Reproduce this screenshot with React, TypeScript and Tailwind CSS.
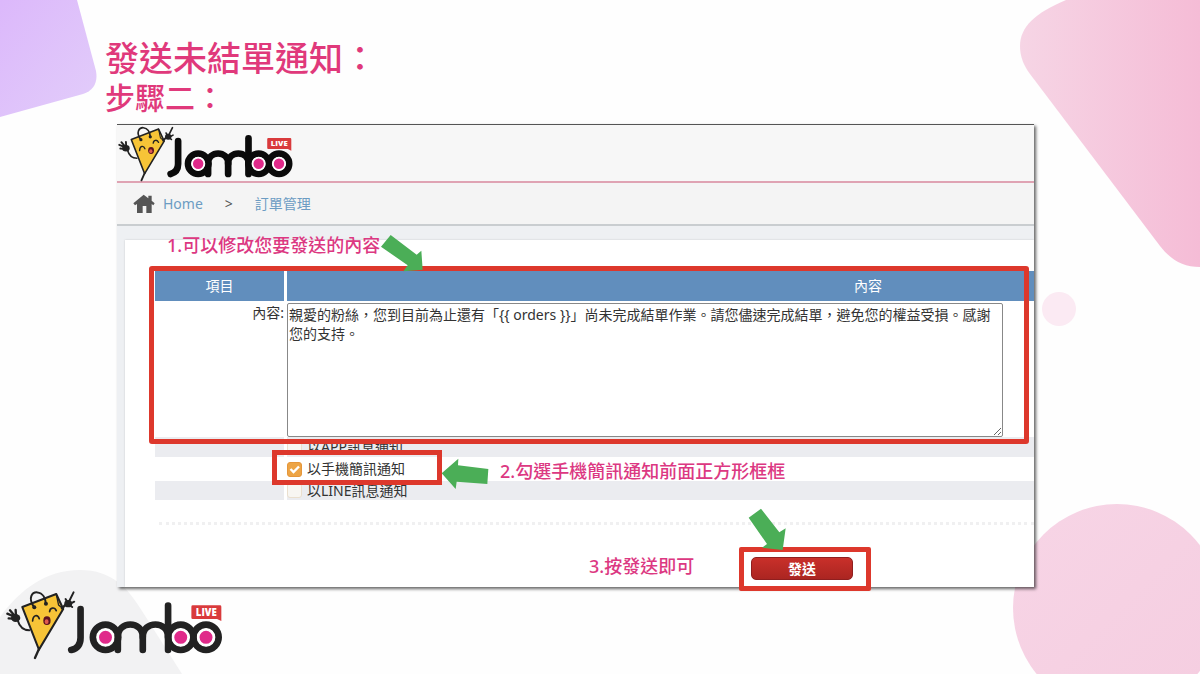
import { useState } from "react";

function JamboLogo({ className, heavy = false }: { className: string; heavy?: boolean }) {
  return (
    <svg viewBox="15 92 655 213" className={className} role="img" aria-label="Jambo Live">
      <g fill="none" stroke="#222" strokeLinecap="round" strokeLinejoin="round">
        <path d="M67 146 L169 107 L190 152 L117 274 Z" fill="#f7c437" strokeWidth="6" />
        <path d="M169 107 L176 140 L190 152" strokeWidth="4" />
        <path d="M103 147 C82 118 97 101 112 102 C129 104 137 120 138 136" strokeWidth="6" />
        <path d="M117 272 L105 299" strokeWidth="7" />
        <path d="M98 188 C99 169 113 167 118 181 M149 160 C150 147 164 145 169 157" strokeWidth="5" />
        <path d="M88 216 C67 216 57 200 53 186" strokeWidth="6" />
        <path d="M186 150 L198 138" strokeWidth="7" />
        <path d="M45 176 L22 166 M45 174 L30 156 M48 172 L47 155 M38 181 L26 180" strokeWidth="7" />
        <path d="M207 130 L221 102 M203 132 L197 122 M212 136 L223 130 M208 140 L217 146" strokeWidth="6" />
      </g>
      <circle cx="103" cy="147" r="6" fill="#222" />
      <circle cx="138" cy="136" r="6" fill="#222" />
      <ellipse cx="47" cy="179" rx="14" ry="12" fill="#222" />
      <ellipse cx="205" cy="136" rx="12" ry="11" fill="#222" />
      <ellipse cx="141" cy="187" rx="11" ry="13" fill="#5b1220" />
      <ellipse cx="140" cy="190" rx="6" ry="7" fill="#e05a4e" />
      <g fill="none" stroke={heavy ? "#0b0b0b" : "#222"} strokeWidth={heavy ? 25 : 20} strokeLinecap="round">
        <path d="M242 152 V238 Q242 268 214 275" />
        <circle cx="317" cy="237" r="38" />
        <path d="M354 237 V275" />
        <path d="M354 236 C354 186 429 186 429 236 V275" />
        <path d="M429 236 C429 186 505 186 505 236" />
        <path d="M505 142 V275" />
        <circle cx="543" cy="237" r="38" />
        <circle cx="619" cy="237" r="38" />
      </g>
      <g fill="#e02a8a" stroke="#fff" strokeWidth="7">
        <circle cx="317" cy="237" r="23" />
        <circle cx="543" cy="237" r="23" />
        <circle cx="619" cy="237" r="23" />
      </g>
      <path d="M579 141 H661 Q665 141 665 145 V188 L652 182 H579 Q575 182 575 178 V145 Q575 141 579 141 Z" fill="#d93a3c" />
      <text x="620" y="172" textAnchor="middle" fontSize="29" fontWeight="800" fill="#fff" fontFamily="Open Sans, sans-serif">
        LIVE
      </text>
    </svg>
  );
}

function Backdrop() {
  return (
    <div aria-hidden="true">
      <svg className="absolute top-0 left-0 h-[118px] w-[98px]" viewBox="0 0 98 118">
        <defs>
          <linearGradient id="lilac" x1="0" y1="0" x2="1" y2="1">
            <stop offset="0" stopColor="#dcb8fb" />
            <stop offset="1" stopColor="#e2cdfa" />
          </linearGradient>
        </defs>
        <path d="M0 0 H77 L96 71 Q99 89 83 94 L0 117 Z" fill="url(#lilac)" />
      </svg>
      <svg className="absolute top-0 right-0 h-[268px] w-[180px]" viewBox="0 0 180 268">
        <defs>
          <linearGradient id="rose" x1="0" y1="0" x2="1" y2="0">
            <stop offset="0" stopColor="#f6d5e5" />
            <stop offset="1" stopColor="#f5bcd6" />
          </linearGradient>
        </defs>
        <path d="M46 0 C15 13 0 27 0 46 C0 57 4 66 10 74 L140 246 C151 260 163 267 180 267 V0 Z" fill="url(#rose)" />
      </svg>
      <div className="absolute top-[292px] right-[124px] size-[34px] rounded-full bg-[#fbeaf3]" />
      <div className="absolute top-[504px] -right-[21px] size-[208px] rounded-full bg-linear-to-br from-[#f7d5e6] to-[#f5cde0]" />
      <svg className="absolute top-[570px] left-0 h-[104px] w-[182px]" viewBox="0 0 182 104">
        <path d="M0 47 C20 20 45 0 80 0 C112 0 128 18 142 41 L182 104 H0 Z" fill="#f2f2f3" />
      </svg>
    </div>
  );
}

function Arrow({ className, viewBox, points }: { className: string; viewBox: string; points: string }) {
  return (
    <svg className={className} viewBox={viewBox} aria-hidden="true">
      <polygon points={points} fill="#4bae57" />
    </svg>
  );
}

const channels = [
  { id: "app", label: "以APP訊息通知", row: "h-[20px]", shade: "bg-[#ebecf0]" },
  { id: "sms", label: "以手機簡訊通知", row: "h-[24px]", shade: "bg-white" },
  { id: "line", label: "以LINE訊息通知", row: "h-[19px]", shade: "bg-[#ebecf0]" },
];

export default function App() {
  const [picked, setPicked] = useState<string[]>(["sms"]);
  const [message, setMessage] = useState(
    "親愛的粉絲，您到目前為止還有「{{ orders }}」尚未完成結單作業。請您儘速完成結單，避免您的權益受損。感謝您的支持。"
  );
  const toggle = (id: string) =>
    setPicked((now) => (now.includes(id) ? now.filter((x) => x !== id) : [...now, id]));

  return (
    <div
      lang="zh-Hant"
      className="relative min-h-screen overflow-hidden bg-[#fefefe] font-['Noto_Sans','Noto_Sans_CJK_TC',sans-serif] text-[14px] text-[#333]"
    >
      <Backdrop />
      <main className="relative pt-[39px]">
        <header className="pl-[105px] font-['Liberation_Sans','Noto_Sans_CJK_TC',sans-serif] font-medium text-[#e0397b]">
          <h1 className="text-[34px] leading-[40px]">發送未結單通知：</h1>
          <h2 className="text-[30px] leading-[40px]">步驟二：</h2>
        </header>

        <section className="relative mt-[5px] mr-[166px] ml-[117px]">
          <div className="overflow-hidden border-t border-[#555] bg-[#eef0f3] shadow-[2px_2px_3px_rgba(0,0,0,0.6)]">
            <div className="h-[58px] border-b-2 border-[#dfa3b3] bg-[#f7f7f7]">
              <JamboLogo heavy className="block h-[57px] w-[176px]" />
            </div>
            <nav className="flex h-[43px] items-center border-b-2 border-[#c9cdd0] bg-[#f4f4f4] pl-4 text-[#6c9cc3]">
              <svg viewBox="68 218 66 60" className="h-5 w-[22px]" aria-hidden="true">
                <path
                  d="M100 220 L114 231 V223 H124 V238 L133 246 L129 252 L124 248 V275 H108 V254 H97 V275 H80 V248 L74 252 L69 246 Z"
                  fill="#555"
                />
              </svg>
              <a href="#home" className="ml-2">Home</a>
              <span className="mx-[22px] text-[#555]">&gt;</span>
              <a href="#orders">訂單管理</a>
            </nav>

            <form
              className="mt-[14px] ml-2 bg-white pt-[31px] pb-[7px] shadow-[0_0_2px_rgba(0,0,0,0.15)]"
              onSubmit={(e) => e.preventDefault()}
            >
              <div className="pl-[30px]">
                <table className="w-full table-fixed border-separate border-spacing-0">
                  <colgroup>
                    <col className="w-[132px]" />
                    <col />
                  </colgroup>
                  <thead>
                    <tr className="h-[30px] bg-[#618ebd] text-white">
                      <th className="border-r-3 border-white p-0 pb-[2px] font-normal">項目</th>
                      <th className="p-0 pb-[2px] pl-[415px] text-center font-normal">內容</th>
                    </tr>
                  </thead>
                  <tbody>
                    <tr>
                      <td className="p-0 pt-[2px] pr-[3px] text-right align-top leading-[19px]">
                        <label htmlFor="message">內容:</label>
                      </td>
                      <td className="p-0 pt-[2px] pr-[31px]">
                        <textarea
                          id="message"
                          value={message}
                          onChange={(e) => setMessage(e.target.value)}
                          className="block h-[134px] w-full resize rounded-[2px] border border-[#888] bg-white py-px pr-2 pl-px leading-[19px]"
                        />
                      </td>
                    </tr>
                    {channels.map(({ id, label, row, shade }) => (
                      <tr key={id} className={`${row} ${shade}`}>
                        <td className="border-r-3 border-white p-0" />
                        <td className="p-0">
                          <label className="flex items-center gap-[5px] leading-[18px] whitespace-nowrap">
                            <span className="relative flex size-[15px]">
                              <input
                                type="checkbox"
                                checked={picked.includes(id)}
                                onChange={() => toggle(id)}
                                className="size-[15px] appearance-none rounded-[3px] border border-[#eadfce] bg-[#f8f6f2] checked:border-[#e5963a] checked:bg-[#eda445]"
                              />
                              {picked.includes(id) && (
                                <svg viewBox="0 0 15 15" className="pointer-events-none absolute inset-0" aria-hidden="true">
                                  <path d="M3.5 7 L6.5 10 L12 4.5" fill="none" stroke="#fff" strokeWidth="2.4" />
                                </svg>
                              )}
                            </span>
                            {label}
                          </label>
                        </td>
                      </tr>
                    ))}
                  </tbody>
                </table>
              </div>
              <div className="mt-[22px] ml-[34px] border-t-3 border-dotted border-[#f0f0f1]" />
              <div className="mt-8 flex items-start pl-[464px]">
                <p className="w-[162px] text-[18px] leading-[18px] font-medium text-[#dc3882]">3.按發送即可</p>
                <button
                  type="submit"
                  className="h-[23px] w-[102px] rounded-[5px] border border-[#8f1f1f] bg-linear-to-b from-[#c9302a] to-[#ab2521] text-[14px] leading-[19px] font-bold text-white"
                >
                  發送
                </button>
              </div>
            </form>
          </div>

          <div className="pointer-events-none text-[18px] leading-[24px] font-medium whitespace-nowrap text-[#dc3882]">
            <div className="absolute top-[142px] right-[5px] left-[32px] h-[178px] rounded-[3px] border-5 border-[#dd382c]" />
            <div className="absolute top-[326px] left-[155px] h-[35px] w-[170px] border-5 border-[#dd382c]" />
            <div className="absolute top-[423px] left-[622px] h-[44px] w-[132px] rounded-[2px] border-5 border-[#dd382c]" />
            <p className="absolute top-[109px] left-[50px]">1.可以修改您要發送的內容</p>
            <p className="absolute top-[335px] left-[383px]">2.勾選手機簡訊通知前面正方形框框</p>
            <Arrow
              className="absolute top-[110px] left-[263px] h-[38px] w-[44px]"
              viewBox="720 12 132 114"
              points="752,15 723,50 803,106 790,124 848,119 844,62 830,74"
            />
            <Arrow
              className="absolute top-[334px] left-[324px] h-[32px] w-[48px]"
              viewBox="904 100 144 96"
              points="906,146 956,102 955,122 1046,133 1043,178 951,171 948,193"
            />
            <Arrow
              className="absolute top-[384px] left-[631px] h-[43px] w-[39px]"
              viewBox="564 54 117 129"
              points="566,83 603,56 658,127 677,115 668,180 606,173 621,162"
            />
          </div>
        </section>

        <footer className="mt-[2px] pl-[5px]">
          <JamboLogo className="h-[71px] w-[218px]" />
        </footer>
      </main>
    </div>
  );
}
